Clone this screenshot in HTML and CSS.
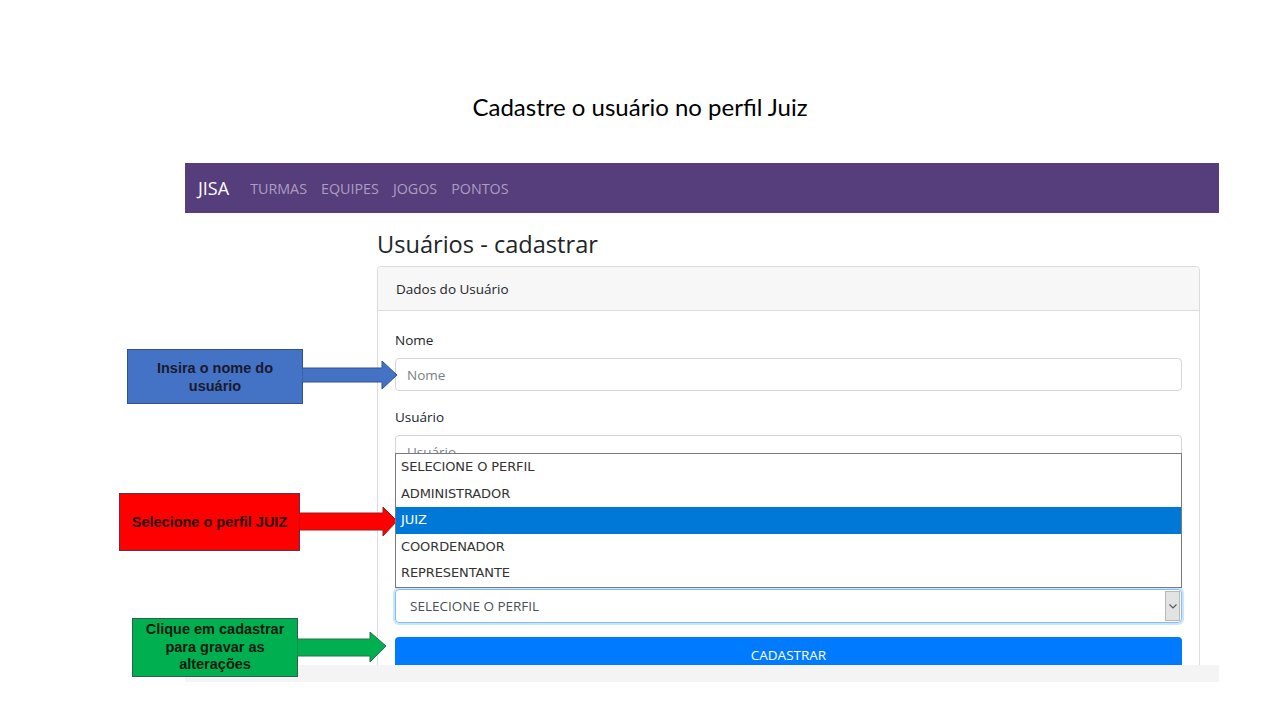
FILE: index.html
```html
<!DOCTYPE html>
<html lang="pt">
<head>
<meta charset="utf-8">
<title>Cadastre o usuário no perfil Juiz</title>
<link rel="stylesheet" href="styles.css">
</head>
<body>
<div class="slide">
  <h1 class="slide-title">Cadastre o usuário no perfil Juiz</h1>

  <div class="shot">
    <nav class="navbar">
      <span class="brand">JISA</span>
      <a class="nav-link">TURMAS</a>
      <a class="nav-link">EQUIPES</a>
      <a class="nav-link">JOGOS</a>
      <a class="nav-link">PONTOS</a>
    </nav>
    <main class="main">
      <h2 class="page-title">Usuários - cadastrar</h2>
      <section class="card">
        <header class="card-header">Dados do Usuário</header>
        <div class="card-body">
          <div class="form-group">
            <label class="label">Nome</label>
            <div class="input placeholder">Nome</div>
          </div>
          <div class="form-group">
            <label class="label">Usuário</label>
            <div class="input placeholder">Usuário</div>
          </div>
          <div class="form-group covered">
            <label class="label">Senha</label>
            <div class="input placeholder">Senha</div>
          </div>
          <div class="form-group">
            <label class="label covered">Perfil</label>
            <div class="select-wrap">
              <ul class="dropdown">
                <li class="option">SELECIONE O PERFIL</li>
                <li class="option">ADMINISTRADOR</li>
                <li class="option selected">JUIZ</li>
                <li class="option">COORDENADOR</li>
                <li class="option">REPRESENTANTE</li>
              </ul>
              <div class="select">
                <span>SELECIONE O PERFIL</span>
                <span class="select-btn">
                  <svg width="8" height="5" viewBox="0 0 8 5"><path d="M0.5 0.5 L4 4 L7.5 0.5" fill="none" stroke="#555" stroke-width="1.1"/></svg>
                </span>
              </div>
            </div>
          </div>
          <button class="btn">CADASTRAR</button>
        </div>
      </section>
    </main>
    <div class="scrollbar"></div>
  </div>

  <div class="callout callout-blue">
    <div class="box">Insira o nome do<br>usuário</div>
    <svg class="arrow" width="100" height="34" viewBox="0 0 100 34">
      <polygon points="0,8 80,8 80,1 95,15 80,29 80,22 0,22" fill="#4472c4" stroke="#2f528f" stroke-width="1"/>
    </svg>
  </div>

  <div class="callout callout-red">
    <div class="box">Selecione o perfil JUIZ</div>
    <svg class="arrow" width="100" height="34" viewBox="0 0 100 34">
      <polygon points="0,8 84,8 84,2 98,16 84,31 84,25 0,25" fill="#ff0000" stroke="#9b1c1c" stroke-width="1"/>
    </svg>
  </div>

  <div class="callout callout-green">
    <div class="box">Clique em cadastrar<br>para gravar as<br>alterações</div>
    <svg class="arrow" width="100" height="34" viewBox="0 0 100 34">
      <polygon points="0,8 73,8 73,1 89,15 73,31 73,25 0,25" fill="#00b050" stroke="#2f6f4a" stroke-width="1"/>
    </svg>
  </div>
</div>
</body>
</html>
```

FILE: styles.css
```css
* { box-sizing: border-box; }

html, body {
  margin: 0;
  padding: 0;
  background: #fff;
}

.slide {
  position: relative;
  width: 1280px;
  height: 720px;
  overflow: hidden;
  padding-top: 92px;
  font-family: "Open Sans", "Noto Sans", sans-serif;
}

.slide-title {
  margin: 0;
  height: 30px;
  line-height: 30px;
  text-align: center;
  font-family: Lato, "Liberation Sans", sans-serif;
  font-weight: 400;
  font-size: 24px;
  color: #000;
}

.shot {
  margin: 41px 0 0 185px;
  width: 1034px;
  display: flex;
  flex-direction: column;
}

.navbar {
  height: 50px;
  background: #563d7c;
  display: flex;
  align-items: center;
  padding-left: 13px;
  gap: 14px;
}

.brand {
  color: #fff;
  font-size: 18px;
  margin-right: 7px;
}

.nav-link {
  color: #ab9fc0;
  font-size: 14.3px;
}

.main {
  height: 452px;
  overflow: hidden;
  padding: 17px 19px 0 192px;
  color: #212529;
}

.page-title {
  margin: 0 0 7px;
  font-size: 23.6px;
  font-weight: 400;
  line-height: 29px;
  color: #212529;
}

.card {
  border: 1px solid #dcdcdc;
  border-radius: 4px;
}

.card-header {
  height: 44px;
  padding: 0 18px;
  display: flex;
  align-items: center;
  background: #f7f7f7;
  border-bottom: 1px solid #dcdcdc;
  font-size: 13.5px;
  border-radius: 4px 4px 0 0;
}

.card-body {
  padding: 19px 17px 0;
}

.form-group {
  margin-bottom: 16px;
}

.covered { visibility: hidden; }

.label {
  display: block;
  height: 20px;
  line-height: 20px;
  font-size: 13.5px;
  margin-bottom: 8px;
}

.input {
  height: 33px;
  border: 1px solid #d5d5d5;
  border-radius: 4px;
  display: flex;
  align-items: center;
  padding: 0 11px;
  font-size: 13.5px;
}

.placeholder { color: #7b7f84; }

.form-group .input.placeholder { visibility: inherit; }

.select-wrap {
  position: relative;
  visibility: visible;
}

.dropdown {
  position: absolute;
  left: 0;
  right: 0;
  bottom: calc(100% + 1px);
  margin: 0;
  padding: 0;
  list-style: none;
  background: #fff;
  border: 1px solid #7a7a7a;
  z-index: 2;
}

.option {
  height: 26.6px;
  line-height: 26.6px;
  padding-left: 5px;
  font-family: "DejaVu Sans", "Noto Sans", sans-serif;
  font-size: 13px;
  letter-spacing: -0.1px;
  color: #333;
}

.option.selected {
  background: #0078d7;
  color: #fff;
}

.select {
  height: 34px;
  border: 1px solid #80bdff;
  border-radius: 4px;
  box-shadow: 0 0 0 2px rgba(0, 123, 255, 0.2);
  display: flex;
  align-items: center;
  justify-content: space-between;
  padding: 0 1px 0 14px;
  font-size: 13.5px;
  color: #495057;
}

.select-btn {
  width: 15px;
  height: 30px;
  background: #e3e3e3;
  border: 1px solid #b8b8b8;
  display: flex;
  align-items: center;
  justify-content: center;
}

.btn {
  display: block;
  width: 100%;
  height: 36px;
  margin-top: -2px;
  border: none;
  border-radius: 4px;
  background: #007bff;
  color: #fff;
  font-family: inherit;
  font-size: 13.5px;
  padding: 0;
}

.scrollbar {
  height: 17px;
  background: #f4f4f4;
}

.callout {
  position: absolute;
  display: flex;
  align-items: center;
}

.box {
  display: flex;
  align-items: center;
  justify-content: center;
  text-align: center;
  font-family: "Liberation Sans", Arial, sans-serif;
  font-weight: 700;
  font-size: 14.5px;
  line-height: 18px;
  color: #111;
}

.arrow {
  display: block;
  margin-left: -1px;
}

.callout-blue { left: 127px; top: 349px; }
.callout-blue .box {
  width: 176px;
  height: 55px;
  background: #4472c4;
  border: 1px solid #2f528f;
  color: #1a1a2e;
}
.callout-blue .arrow { margin-top: 1px; }

.callout-red { left: 119px; top: 493px; }
.callout-red .box {
  width: 181px;
  height: 58px;
  background: #ff0000;
  border: 1px solid #6b2c4a;
  color: #2a0a0a;
}

.callout-green { left: 132px; top: 618px; }
.callout-green .box {
  width: 166px;
  height: 59px;
  background: #00b050;
  border: 1px solid #2f5f4a;
  line-height: 17.5px;
  color: #0c1a10;
}
.callout-green .arrow { margin-top: 0; }
```
